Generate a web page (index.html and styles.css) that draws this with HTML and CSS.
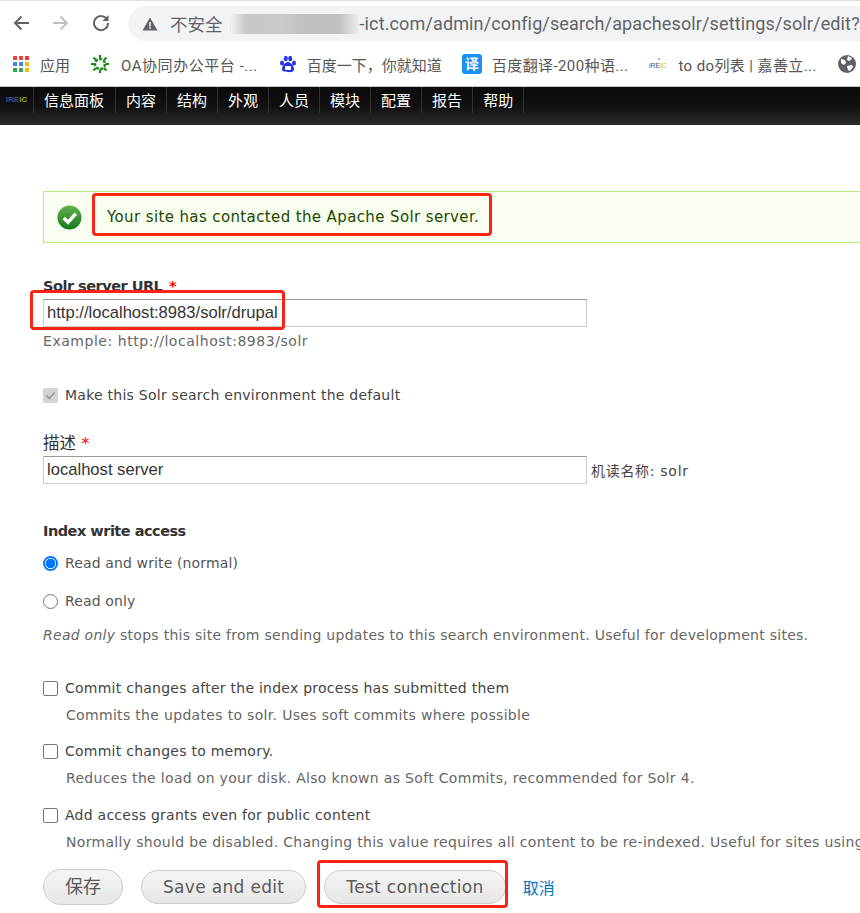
FILE: index.html
```html
<!DOCTYPE html>
<html lang="zh">
<head>
<meta charset="utf-8">
<title>Solr settings</title>
<link rel="stylesheet" href="styles.css">
</head>
<body>
<div class="page">
  <header class="chrome">
    <div class="navrow">
      <svg class="nav nav-back" viewBox="0 0 18 18"><path d="M17 9H3M9.500 2.500 3 9l6.500 6.500" fill="none" stroke="#5f6368" stroke-width="2"/></svg>
      <svg class="nav nav-fwd" viewBox="0 0 18 18"><path d="M1 9h14M8.500 2.500 15 9l-6.500 6.500" fill="none" stroke="#bdc1c6" stroke-width="2"/></svg>
      <svg class="nav nav-reload" viewBox="0 0 18 18"><path d="M15 5.500A7 7 0 1 0 16 9" fill="none" stroke="#5f6368" stroke-width="2"/><path d="M16.500 1v6h-6z" fill="#5f6368"/></svg>
      <div class="omnibox">
        <svg class="warn" viewBox="0 0 16 16"><path d="M8 1.500 15.500 14.500H.5z" fill="#5f6368"/><path d="M7.200 6h1.600v4.500H7.200zM7.200 11.300h1.600v1.500H7.200z" fill="#f1f3f4"/></svg>
        <span class="insecure">不安全</span>
        <span class="pipe">|</span>
        <span class="blur"></span>
        <span class="url">-ict.com/admin/config/search/apachesolr/settings/solr/edit?</span>
      </div>
    </div>
    <div class="bookmarks">
      <div class="bm bm-apps">
        <svg class="bm-ico" viewBox="0 0 18 18">
          <rect x="1" y="1" width="4" height="4" fill="#ea4335"/><rect x="7" y="1" width="4" height="4" fill="#ea4335"/><rect x="13" y="1" width="4" height="4" fill="#ea4335"/>
          <rect x="1" y="7" width="4" height="4" fill="#4285f4"/><rect x="7" y="7" width="4" height="4" fill="#4285f4"/><rect x="13" y="7" width="4" height="4" fill="#fbbc05"/>
          <rect x="1" y="13" width="4" height="4" fill="#34a853"/><rect x="7" y="13" width="4" height="4" fill="#34a853"/><rect x="13" y="13" width="4" height="4" fill="#fbbc05"/>
        </svg>
        <span>应用</span>
      </div>
      <div class="bm bm-oa">
        <svg class="bm-ico" viewBox="0 0 18 18"><circle cx="9" cy="9" r="5" fill="none" stroke="#1a8a1a" stroke-width="2.500" stroke-dasharray="3 1.400"/><path d="M9 0v3.500M9 14.500V18M0 9h3.500M14.500 9H18M2.500 2.500l2.500 2.500M13 13l2.500 2.500M15.500 2.500 13 5M5 13l-2.500 2.500" stroke="#1a8a1a" stroke-width="2.200"/></svg>
        <span class="sp-wide">OA协同办公平台 -...</span>
      </div>
      <div class="bm bm-baidu">
        <svg class="bm-ico" viewBox="0 0 18 18"><ellipse cx="3" cy="8" rx="2" ry="2.600" fill="#2932e1"/><ellipse cx="6.800" cy="3.500" rx="2" ry="2.700" fill="#2932e1"/><ellipse cx="11.200" cy="3.500" rx="2" ry="2.700" fill="#2932e1"/><ellipse cx="15" cy="8" rx="2" ry="2.600" fill="#2932e1"/><path d="M9 7c3 0 6 4 6 7 0 3-3 3.500-6 3s-6 0-6-3 3-7 6-7z" fill="#2932e1"/><rect x="6" y="11" width="6" height="4" rx="1" fill="#fff"/></svg>
        <span>百度一下，你就知道</span>
      </div>
      <div class="bm bm-trans">
        <span class="trans-ico">译</span>
        <span class="sp-oa">百度翻译-200种语...</span>
      </div>
      <div class="bm bm-todo">
        <svg class="bm-ico" viewBox="0 0 22 18"><circle cx="11" cy="4" r=".8" fill="#3a55a5"/><text x="1" y="13" class="mini-logo">iRE<tspan fill="#c9b81e">iC</tspan></text></svg>
        <span class="sp-oa">to do列表 | 嘉善立...</span>
      </div>
      <svg class="globe" viewBox="0 0 18 18"><circle cx="9" cy="9" r="9" fill="#5f6368"/><path d="M3 4l4 1 1 3-2 2-3-2zM10 1l4 2-2 3-3-1zM9 11l5-1 1 2-3 4-2-1z" fill="#fff"/></svg>
    </div>
  </header>

  <nav class="toolbar">
    <div class="tb-logo">iRE<b>iC</b></div>
    <ul class="tb-menu">
      <li>信息面板</li><li>内容</li><li>结构</li><li>外观</li><li>人员</li><li>模块</li><li>配置</li><li>报告</li><li>帮助</li>
    </ul>
  </nav>

  <main class="content">
    <div class="message">
      <svg class="ok" viewBox="0 0 26 26">
        <defs><linearGradient id="okg" x1="0" y1="0" x2="0" y2="1"><stop offset="0" stop-color="#63b04a"/><stop offset="1" stop-color="#157a1e"/></linearGradient></defs>
        <circle cx="13" cy="13" r="12.500" fill="url(#okg)"/>
        <path d="M7 13.500l4.500 4.500L19.500 9" fill="none" stroke="#fff" stroke-width="3.500"/>
      </svg>
      <span class="msg-text mark">Your site has contacted the Apache Solr server.</span>
    </div>

    <div class="field field-url">
      <label class="lbl">Solr server URL <em>*</em></label>
      <div class="inputbox"><span class="mark mark-url"></span>http://localhost:8983/solr/drupal</div>
      <div class="hint">Example: http://localhost:8983/solr</div>
    </div>

    <div class="check check-default">
      <span class="cb cb-disabled"><svg viewBox="0 0 13 13"><path d="M2.500 6.500l3 3 5-6" fill="none" stroke="#9a9a9a" stroke-width="1.800"/></svg></span>
      <span>Make this Solr search environment the default</span>
    </div>

    <div class="field field-desc">
      <label class="lbl lbl-cjk">描述 <em>*</em></label>
      <div class="inputline">
        <div class="inputbox">localhost server</div>
        <span class="machine">机读名称: solr</span>
      </div>
    </div>

    <div class="section">
      <div class="lbl">Index write access</div>
      <div class="radio radio-first"><span class="rd rd-on"></span><span>Read and write (normal)</span></div>
      <div class="radio"><span class="rd"></span><span>Read only</span></div>
      <div class="hint hint-radio"><i>Read only</i> stops this site from sending updates to this search environment. Useful for development sites.</div>
    </div>

    <div class="check check-opt check-first">
      <span class="cb"></span><span>Commit changes after the index process has submitted them</span>
    </div>
    <div class="hint hint-sub">Commits the updates to solr. Uses soft commits where possible</div>
    <div class="check check-opt check-mem">
      <span class="cb"></span><span>Commit changes to memory.</span>
    </div>
    <div class="hint hint-sub">Reduces the load on your disk. Also known as Soft Commits, recommended for Solr 4.</div>
    <div class="check check-opt check-grants">
      <span class="cb"></span><span>Add access grants even for public content</span>
    </div>
    <div class="hint hint-sub">Normally should be disabled. Changing this value requires all content to be re-indexed. Useful for sites using</div>

    <div class="actions">
      <span class="btn btn-save">保存</span>
      <span class="btn btn-edit">Save and edit</span>
      <span class="btn btn-test"><span class="mark mark-test"></span>Test connection</span>
      <a class="cancel">取消</a>
    </div>
  </main>
</div>
</body>
</html>
```

FILE: styles.css
```css
* { box-sizing: border-box; }
html, body { margin: 0; padding: 0; background: #fff; }
.page {
  width: 860px; height: 913px; overflow: hidden;
  font-family: "DejaVu Sans", "Noto Sans CJK SC", sans-serif;
  color: #444; font-size: 14px;
}
.chrome { height: 87px; background: #fff; border-top: 1px solid #dee1e6; border-bottom: 1px solid #c8c8c8; }
.navrow { height: 41px; padding-top: 5px; display: flex; align-items: flex-start; }
.nav { width: 18px; height: 18px; margin-top: 8px; flex: none; }
.nav-back { margin-left: 12px; }
.nav-fwd { margin-left: 22px; }
.nav-reload { margin-left: 22px; }
.omnibox {
  margin-left: 18px; flex: none; width: 760px; height: 35px;
  background: #f1f3f4; border-radius: 18px;
  display: flex; align-items: center; padding-left: 14px;
  font-family: "Roboto", "Noto Sans CJK SC", sans-serif; font-size: 18px; color: #5f6368;
  white-space: nowrap;
}
.warn { width: 16px; height: 16px; flex: none; }
.insecure { margin-left: 12px; font-size: 17.500px; }
.pipe { margin-left: 7px; color: #888; font-weight: 300; }
.blur {
  width: 128px; height: 20px; flex: none; margin-left: -2px;
  background: linear-gradient(90deg,#f1f1f1,#c6c7c8 12%,#c8c9cb 40%,#c2bfbf 60%,#c0c2c4 85%,#eee);
}
.url { color: #5f6368; letter-spacing: .13px; }
.bookmarks { height: 44px; display: flex; align-items: center; font-family: "Roboto", "Noto Sans CJK SC", sans-serif; font-size: 15px; color: #555; }
.bm { display: flex; align-items: center; white-space: nowrap; flex: none; }
.bm-ico { width: 18px; height: 18px; flex: none; }
.sp-oa { letter-spacing: .4px; }
.sp-wide { letter-spacing: .55px; }
.bm-apps { margin-left: 12px; gap: 10px; }
.bm-oa { margin-left: 21px; gap: 12px; }
.bm-baidu { margin-left: 21px; gap: 10px; }
.bm-trans { margin-left: 20px; gap: 10px; }
.bm-todo { margin-left: 20px; gap: 8px; }
.bm-todo .bm-ico { width: 22px; }
.mini-logo { font-family: "Liberation Sans", sans-serif; font-size: 7px; fill: #3a55a5; }
.trans-ico {
  width: 20px; height: 20px; border-radius: 3px; background: #1a90f5; color: #fff;
  font-size: 14px; font-weight: 700; text-align: center; line-height: 20px; flex: none;
}
.globe { width: 18px; height: 18px; flex: none; margin-left: 21px; }

.toolbar {
  height: 38px; display: flex; align-items: flex-start;
  background: linear-gradient(180deg,#0b0b0b 0,#101010 50%,#2c2c2c 100%);
  color: #fff;
}
.tb-logo { width: 34px; height: 26px; font: 700 8px/26px "Liberation Sans", sans-serif; color: #3a4f8f; text-align: center; border-right: 1px solid #333; }
.tb-logo b { color: #a8a020; }
.tb-menu { list-style: none; margin: 0; padding: 0; display: flex; height: 26px; }
.tb-menu li {
  padding: 0 10px; line-height: 25px; font-size: 15px; border-right: 1px solid #333;
  font-family: "Noto Sans CJK SC", sans-serif;
}
.tb-menu li:first-child { padding-right: 11px; }

.content { padding: 66px 0 0 43px; }
.mark { outline: 3px solid #fa2318; border-radius: 2px; }
.message {
  width: 900px; height: 52px; background: #f8fff0; border: 1px solid #b8e986;
  display: flex; align-items: center; color: #234600; font-size: 15px;
}
.ok { width: 25px; height: 25px; margin-left: 13px; flex: none; }
.msg-text {
  margin: 0 0 5px 12px; padding: 0 11px 0 13px; height: 39px; line-height: 44px;
  white-space: nowrap; outline-offset: -1px; letter-spacing: .38px;
}

.field-url { margin-top: 33px; }
.lbl { display: block; font-weight: 700; color: #333; font-size: 14.500px; line-height: 20px; letter-spacing: -.5px; }
.lbl em { color: #f00; font-style: normal; margin-left: 2px; }
.lbl-cjk { font-weight: 400; font-size: 16.500px; letter-spacing: 0; margin-bottom: 2px; }
.lbl-cjk em { margin-left: 0; }
.inputbox {
  width: 544px; height: 28px; border: 1px solid #ccc; border-top-color: #999;
  font: 16.600px/26px "Liberation Sans", sans-serif; color: #333; padding-left: 3px; background: #fff;
  position: relative; flex: none;
}
.mark-url { position: absolute; left: -12px; top: -8px; width: 251px; height: 36px; outline-offset: -1px; }
.field-url .lbl { margin-bottom: 3px; }
.hint { font-size: 14px; color: #666; line-height: 20px; white-space: nowrap; }
.field-url .hint { margin-top: 4px; letter-spacing: .54px; }
.check { display: flex; align-items: center; white-space: nowrap; line-height: 20px; color: #444; letter-spacing: .25px; }
.check-default { margin-top: 34px; gap: 7px; }
.cb { width: 15px; height: 15px; border: 1px solid #767676; border-radius: 2px; background: #fff; flex: none; }
.cb-disabled { background: #d4d4d4; border-color: #d4d4d4; display: block; }
.cb-disabled svg { display: block; width: 13px; height: 13px; }
.field-desc { margin-top: 29px; }
.inputline { display: flex; align-items: center; }
.machine { margin-left: 4px; font-size: 14px; color: #444; letter-spacing: .7px; }
.section { margin-top: 37px; }
.radio { display: flex; align-items: center; gap: 7px; line-height: 20px; margin-top: 18px; color: #555; letter-spacing: .13px; }
.radio-first { margin-top: 12px; }
.rd { width: 15px; height: 15px; border: 1px solid #767676; border-radius: 50%; flex: none; background: #fff; }
.rd-on { border: 2px solid #0075ff; background: radial-gradient(circle,#0075ff 0,#0075ff 4.500px,#fff 5px); }
.hint-radio { margin-top: 14px; letter-spacing: .27px; }
.check-opt { gap: 7px; }
.check-first { margin-top: 33px; }
.check-mem { margin-top: 16px; }
.check-grants { margin-top: 17px; }
.hint-sub { margin-left: 23px; margin-top: 7px; letter-spacing: .32px; }
.actions { display: flex; align-items: center; margin-top: 17px; height: 36px; white-space: nowrap; }
.btn {
  height: 34px; border: 1px solid #ccc; border-radius: 18px; padding: 0 21px;
  background: linear-gradient(180deg,#f5f5f5,#e6e6e6);
  font-size: 17px; line-height: 32px; color: #5a5a5a; flex: none; letter-spacing: .32px;
}
.btn-save { height: 36px; line-height: 34px; font-size: 18px; letter-spacing: 0; }
.btn-edit { margin-left: 18px; }
.btn-test { margin-left: 18px; position: relative; }
.mark-test { position: absolute; left: -6px; top: -9px; width: 187px; height: 44px; outline-offset: -1px; }
.cancel { margin-left: 17px; color: #0074bd; font-size: 16px; }
```
